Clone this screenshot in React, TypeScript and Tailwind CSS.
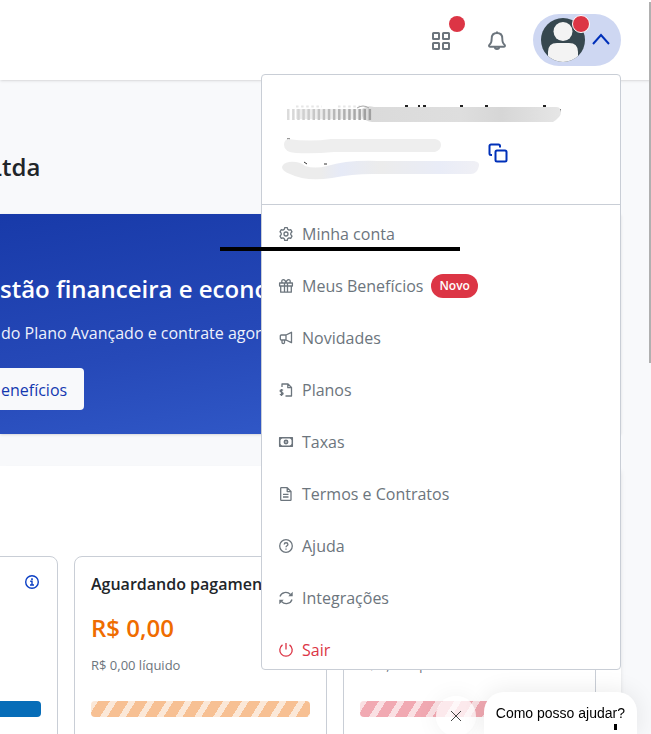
import type { ReactNode } from 'react'

function Icon({ children }: { children: ReactNode }) {
  return (
    <svg
      className="size-4 shrink-0"
      viewBox="0 0 16 16"
      fill="none"
      stroke="currentColor"
      strokeWidth="1.3"
      strokeLinejoin="round"
      aria-hidden="true"
    >
      {children}
    </svg>
  )
}

const ITEMS = [
  {
    label: 'Minha conta',
    icon: (
      <Icon>
        <path d="M6.7 1.600h2.600l.4 1.700 1.300.8 1.700-.5L14 5.800l-1.200 1.300v1.600l1.200 1.500-1.300 2.200-1.700-.5-1.300.8-.4 1.700H6.700l-.4-1.700-1.300-.8-1.700.5L2 10.200l1.200-1.500V7.100L2 5.800l1.300-2.200 1.700.5 1.300-.8z" />
        <circle cx="8" cy="8" r="2" />
      </Icon>
    ),
  },
  {
    label: 'Meus Benefícios',
    badge: 'Novo',
    icon: (
      <Icon>
        <path d="M1.600 5h12.800v3H1.600zM2.700 8v6.200h10.600V8M6.500 5v9.200M9.500 5v9.200M8 4.800C7.600 2.800 6.600 1.700 5.300 1.700c-1.700 0-2.100 2-.8 3.200M8 4.800c.4-2 1.400-3.100 2.700-3.100 1.700 0 2.100 2 .8 3.200" />
      </Icon>
    ),
  },
  {
    label: 'Novidades',
    icon: (
      <Icon>
        <path d="M8 5 13.500 2.300v10.400L8 10H3.300a1 1 0 0 1-1-1V6a1 1 0 0 1 1-1zM8 5v5M4 10v2.500c0 1.500 2.500 1.500 2.500 0V10" />
      </Icon>
    ),
  },
  {
    label: 'Planos',
    icon: (
      <Icon>
        <path d="M4 5V2h6l3.500 3.500V14H7.500M9.800 2v3.700h3.700" />
        <path d="M5 8.300c-.5-.6-2.900-.8-2.900.7 0 1.600 3 .9 3 2.500 0 1.500-2.500 1.400-3.100.6M3.600 7v7" />
      </Icon>
    ),
  },
  {
    label: 'Taxas',
    icon: (
      <Icon>
        <path d="M1.700 3.700h12.600v8.600H1.700z" strokeWidth="1.500" />
        <circle cx="8" cy="8" r="1.600" strokeWidth="1.700" />
        <path
          d="M1.500 3.500h3.300L1.500 6.800zM14.500 3.500h-3.300l3.300 3.300zM1.500 12.500h3.300L1.500 9.200zM14.500 12.500h-3.300l3.300-3.300z"
          fill="currentColor"
          stroke="none"
        />
      </Icon>
    ),
  },
  {
    label: 'Termos e Contratos',
    icon: (
      <Icon>
        <path d="M3.300 1.700h5.900L13 5.400v8.300a.6.6 0 0 1-.6.6H3.300a.6.6 0 0 1-.6-.6V2.300a.6.6 0 0 1 .6-.6zM9.200 1.700v3.900H13M5 8.300h5.500M5 11h5.500" />
      </Icon>
    ),
  },
  {
    label: 'Ajuda',
    icon: (
      <Icon>
        <circle cx="8" cy="8" r="6.300" />
        <path d="M6.200 6.500c0-2.400 3.700-2.300 3.700-.1C9.900 7.800 8 7.700 8 9.300M8 10.500v1.300" />
      </Icon>
    ),
  },
  {
    label: 'Integrações',
    icon: (
      <Icon>
        <path d="M2 6.500C3.200 2.300 9 .9 12.500 4.500M14 9.500c-1.200 4.200-7 5.600-10.500 2" />
        <path d="M14.700 1.800v4.400h-4.400zM1.300 14.200V9.800h4.400z" fill="currentColor" stroke="none" />
      </Icon>
    ),
  },
  {
    label: 'Sair',
    danger: true,
    icon: (
      <Icon>
        <path d="M8 1v6.500M4.500 2.900a6.200 6.200 0 1 0 7 0" />
      </Icon>
    ),
  },
]

function RedactedAccount() {
  return (
    <div className="border-b border-[#c9ced6] px-5 pt-7 pb-[23px]">
      <svg width="284" height="24" viewBox="0 0 284 24" aria-hidden="true">
        <defs>
          <linearGradient id="name" x1="0" x2="1">
            <stop offset="0" stopColor="#dadada" />
            <stop offset="0.5" stopColor="#dedede" />
            <stop offset="0.7" stopColor="#d6d6d6" />
            <stop offset="1" stopColor="#e6e6e6" />
          </linearGradient>
          <linearGradient id="combFade" gradientUnits="userSpaceOnUse" x1="4" x2="84" y1="0" y2="0">
            <stop offset="0" stopColor="#dddddd" />
            <stop offset="1" stopColor="#a0a0a0" />
          </linearGradient>
          <filter id="soft" x="-5%" y="-20%" width="110%" height="140%">
            <feGaussianBlur stdDeviation="0.7" />
          </filter>
        </defs>
        <path d="M123 2h3v6h-3zM136 2h2v6h-2zM141 2h3v6h-3zM178 2h3v6h-3zM203 2h3v6h-3zM261 2h3v6h-3zM275 6h4v3h-4z" fill="#222222" />
        <g filter="url(#soft)">
          <path d="M14 11H84" stroke="#ededed" strokeWidth="10" />
          <path d="M80 6q5-4 12-2h182q5 0 5 5t-8 10H90q-8-1-10-6z" fill="url(#name)" />
          <path d="M5 11.500H90" stroke="url(#combFade)" strokeWidth="11" strokeDasharray="2.500 2.600" />
          <path d="M14 3.500H40M56 3.500H78" stroke="#e6e6e6" strokeWidth="2" strokeDasharray="2.500 2.600" />
          <path d="M75 5q6-4 12 0" stroke="#a8a8a8" fill="none" />
        </g>
      </svg>
      <div className="mt-2 flex items-start">
        <svg width="200" height="46" viewBox="0 0 200 46" aria-hidden="true">
          <defs>
            <linearGradient id="doc" x1="0" x2="1">
              <stop offset="0" stopColor="#ececec" />
              <stop offset="0.2" stopColor="#ececec" />
              <stop offset="0.300" stopColor="#e6eaf7" />
              <stop offset="0.500" stopColor="#ececec" />
              <stop offset="0.800" stopColor="#e9ecf7" />
              <stop offset="1" stopColor="#f0f0f5" />
            </linearGradient>
          </defs>
          <path d="M5 4h3M22 27l3 2M42 29h3" stroke="#333333" />
          <g filter="url(#soft)">
            <path d="M6 4q22 3 43 0h104q6 1 6 6t-6 7H52q-20 2-38 1-12-1-12-8 0-5 4-6z" fill="#eeeeee" />
            <path d="M7 27q10-1 16 4 10 3 22 0 20-6 50-5h97q6 1 5 5-2 8-8 8H90q-20 0-40 4-26 4-42-4-8-3-8-7 1-4 7-5z" fill="url(#doc)" />
          </g>
        </svg>
        <button type="button" aria-label="Copiar" className="mt-0.5 p-1.5 text-[#0030b9]">
          <svg width="20" height="20" viewBox="0 0 20 20" fill="none" stroke="currentColor" strokeWidth="2">
            <path d="M12 4.500V3a1.500 1.500 0 0 0-1.500-1.500H3A1.500 1.500 0 0 0 1.500 3v7.500A1.500 1.500 0 0 0 3 12h1" />
            <rect x="7.500" y="7.500" width="11" height="11" rx="1.500" />
          </svg>
        </button>
      </div>
    </div>
  )
}

function AccountMenu() {
  return (
    <div className="absolute top-full right-0 z-20 mt-2 w-90 rounded border border-[#c9ced6] bg-white">
      <RedactedAccount />
      <ul className="flex flex-col gap-4 pt-[11px] pb-px">
        {ITEMS.map(item => (
          <li key={item.label}>
            <a
              href="#"
              className={`flex h-9 items-center gap-2 px-4 ${item.danger ? 'text-[#dc3545]' : 'text-[#6c757d]'}`}
            >
              {item.icon}
              {item.label}
              {item.badge && (
                <span className="rounded-full bg-[#dc3545] px-2 py-1 text-xs font-semibold text-white">
                  {item.badge}
                </span>
              )}
            </a>
          </li>
        ))}
      </ul>
    </div>
  )
}

function Header() {
  return (
    <header className="relative z-10 flex h-20 shrink-0 items-center justify-end bg-white pr-[30px] shadow-sm">
      <button type="button" aria-label="Aplicativos" className="relative mr-9 text-[#6c757d]">
        <svg width="20" height="20" viewBox="0 0 20 20" fill="none" stroke="currentColor" strokeWidth="2">
          <rect x="2" y="3" width="6" height="6" rx="0.500" />
          <rect x="12" y="3" width="6" height="6" rx="0.500" />
          <rect x="2" y="13" width="6" height="6" rx="0.500" />
          <rect x="12" y="13" width="6" height="6" rx="0.500" />
        </svg>
        <span className="absolute -top-3.5 -right-3.5 size-4 rounded-full bg-[#dc3545]" />
      </button>
      <button type="button" aria-label="Notificações" className="mr-[26px] text-[#6c757d]">
        <svg width="20" height="22" viewBox="0 0 20 22" fill="none" stroke="currentColor" strokeWidth="1.900" strokeLinejoin="round">
          <path d="M10 2.500V4M10 4c-3.500 0-5.300 2.300-5.300 5.500 0 3.700-.8 5.200-2.200 6.200-.9.700-.6 2 .5 2h14c1.100 0 1.400-1.300.5-2-1.400-1-2.200-2.500-2.200-6.200C15.300 6.300 13.500 4 10 4zM7.700 18c.2 2.700 4.400 2.700 4.600 0" />
        </svg>
      </button>
      <div className="relative">
        <button
          type="button"
          aria-label="Conta"
          aria-expanded="true"
          className="flex h-13 w-22 items-center gap-[7px] rounded-full bg-[#ced7f2] pl-2"
        >
          <svg className="size-11 shrink-0" viewBox="0 0 44 44">
            <defs>
              <clipPath id="face">
                <circle cx="22" cy="22" r="22" />
              </clipPath>
            </defs>
            <g clipPath="url(#face)">
              <path d="M0 0h44v44H0z" fill="#36474f" />
              <circle cx="22" cy="13.500" r="9.500" fill="#f3f3f3" />
              <path d="M7 44V34q0-9 9-9h12q9 0 9 9v10z" fill="#f3f3f3" />
            </g>
          </svg>
          <svg width="18" height="12" viewBox="0 0 18 12" fill="none" stroke="#0030b9" strokeWidth="2" className="mb-0.5">
            <path d="M1 11 9 2l8 9" />
          </svg>
          <span className="absolute top-px left-[39px] size-[18px] rounded-full border border-white bg-[#dc3545]" />
        </button>
        <AccountMenu />
      </div>
    </header>
  )
}

function Banner() {
  return (
    <section className="h-55 overflow-hidden bg-linear-170 from-[#183aa9] via-[#2649b8] to-[#3159c8] to-85% pt-[59px] whitespace-nowrap text-white shadow">
      <h2 className="text-2xl font-semibold">stão financeira e economize</h2>
      <p className="mt-4 pl-px text-[#eef1fb]">do Plano Avançado e contrate agora</p>
      <a href="#" className="mt-[23px] inline-flex h-[42px] items-center rounded-r bg-[#f8f9fb] pt-0.5 pr-[17px] pl-px text-[#1438b0]">
        enefícios
      </a>
    </section>
  )
}

function Card({ title, value, net, color, bar }: {
  title?: string
  value?: string
  net?: string
  color?: string
  bar: string
}) {
  return (
    <article className="flex h-60 w-[253px] shrink-0 flex-col rounded-lg border border-[#c9ced6] px-4 pt-[15px]">
      <h3 className="flex h-6 items-center whitespace-nowrap font-semibold text-[#212529]">
        {title}
        {!title && (
          <button type="button" aria-label="Informações" className="mb-1 ml-auto text-[#0b3fc4]">
            <svg width="18" height="18" viewBox="0 0 18 18" fill="none" stroke="currentColor" strokeWidth="1.400">
              <circle cx="9" cy="9" r="6.300" />
              <path d="M7.200 8.300H9v3.600M7 12h4" />
              <path d="M8.200 5.300h1.600v1.600H8.200z" fill="currentColor" stroke="none" />
            </svg>
          </button>
        )}
      </h3>
      <p className={`mt-4 h-8 text-2xl font-semibold ${color ?? ''}`}>{value}</p>
      <p className="mt-[11px] h-5 text-[13px] leading-5 text-[#6c757d]">{net}</p>
      <div className={`mt-[26px] h-4 rounded ${bar}`} />
    </article>
  )
}

function ChatPrompt() {
  return (
    <aside className="fixed right-[14px] bottom-0 z-30 flex h-[42px] items-start gap-2">
      <button
        type="button"
        aria-label="Fechar"
        className="mt-1 flex size-10 items-center justify-center rounded-full bg-white/75 shadow-[0_0_24px_rgba(0,0,0,0.06)]"
      >
        <svg width="12" height="12" viewBox="0 0 12 12" stroke="#444444">
          <path d="m1 1 10 10M11 1 1 11" />
        </svg>
      </button>
      <p className="relative h-[42px] rounded-t-[20px] bg-white px-3 pt-[11px] font-['Liberation_Sans',sans-serif] text-sm leading-5 text-black shadow-[0_0_24px_rgba(0,0,0,0.09)]">
        Como posso ajudar?
        <span className="absolute right-5 bottom-1 h-1.5 w-[3px] bg-black" />
      </p>
    </aside>
  )
}

export default function App() {
  return (
    <div className="relative flex h-screen flex-col overflow-hidden bg-[#f8f9fb] font-['Open_Sans',sans-serif]">
      <Header />
      <main className="pr-[30px]">
        <h1 className="-ml-[11px] pt-[71px] text-2xl font-semibold text-[#212529]">Ltda</h1>
        <div className="mt-[31px]">
          <Banner />
        </div>
        <section className="mt-8 flex justify-end gap-4 bg-white pt-[90px] pr-[25px] shadow-md">
          <Card bar="bg-[#076db8]" />
          <Card
            title="Aguardando pagamento"
            value="R$ 0,00"
            net="R$ 0,00 líquido"
            color="text-[#ef6c00]"
            bar="bg-[repeating-linear-gradient(122deg,#fbe8d8_0px,#fbe8d8_6px,#f7c093_6px,#f7c093_16px)]"
          />
          <Card
            title="Vencidas"
            value="R$ 0,00"
            net="R$ 0,00 líquido"
            color="text-[#dc3545]"
            bar="bg-[repeating-linear-gradient(122deg,#fae0e3_0px,#fae0e3_6px,#f1a9b2_6px,#f1a9b2_16px)]"
          />
        </section>
      </main>
      <div className="absolute top-[247px] left-[220px] z-30 h-1 w-60 bg-black" />
      {/* scroll thumb */}
      <div className="absolute top-0.5 right-0 z-30 h-[361px] w-0.5 bg-[#b0b0b0]" />
      <ChatPrompt />
    </div>
  )
}
